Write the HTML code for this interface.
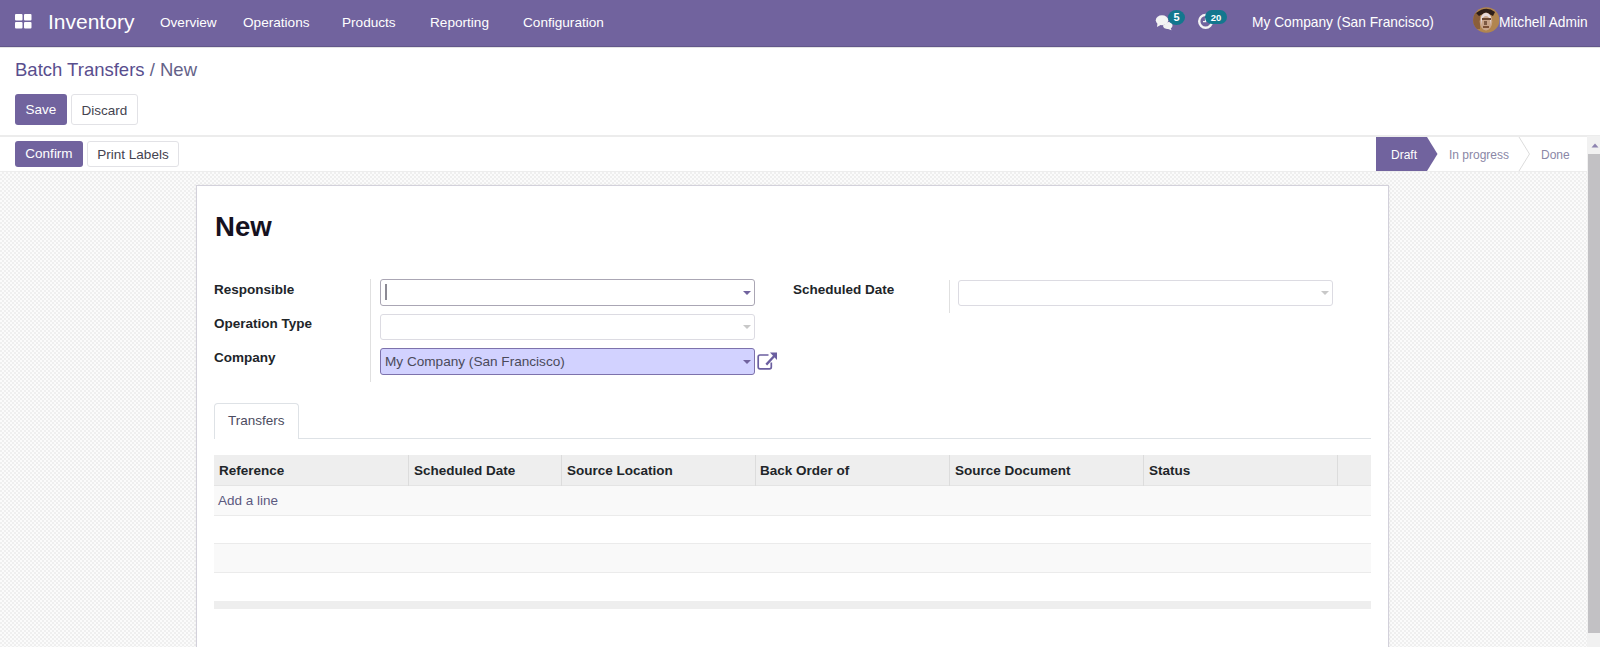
<!DOCTYPE html>
<html><head><meta charset="utf-8">
<style>
*{box-sizing:border-box;margin:0;padding:0}
html,body{width:1600px;height:647px;overflow:hidden;background:#fff;font-family:"Liberation Sans",sans-serif;font-size:13.5px;color:#212529}
.a{position:absolute;white-space:nowrap}
#nav{position:absolute;z-index:2;left:0;top:0;width:1600px;height:47px;background:#71639e;color:#fff;border-bottom:1px solid #62578a;box-shadow:0 1px 0 #e4e4e4}
#nav .t{position:absolute;top:0;line-height:46px;font-size:13.6px;color:#fff}
.badge{position:absolute;background:#13778e;color:#fff;font-weight:bold;font-size:10px;text-align:center;border-radius:9px}
#cp{position:absolute;left:0;top:46px;width:1600px;height:90px;background:#fff}
.btn{position:absolute;height:31px;border-radius:3px;font-size:13.5px;line-height:31px;text-align:center}
.bp{background:#71639e;color:#fff}
.bs{background:#fff;color:#44434f;border:1px solid #e2e2e6}
#bg{position:absolute;left:0;top:172px;width:1588px;height:475px;
 background-color:#f6f6f6;
 background-image:repeating-conic-gradient(#efefef 0 25%,#fbfbfb 0 50%);background-size:4px 4px}
#sheet{position:absolute;left:196px;top:185px;width:1193px;height:470px;background:#fff;border:1px solid #d3d1db;box-shadow:0 0 3px rgba(0,0,0,.06)}
.lbl{position:absolute;font-weight:bold;font-size:13.5px;color:#212529}
.inp{position:absolute;height:26px;border:1px solid #ced4da;border-radius:3px;background:#fff}
.caret{position:absolute;width:0;height:0;border-left:4px solid transparent;border-right:4px solid transparent;border-top:4px solid #71639e}
.th{position:absolute;top:456px;font-weight:bold;font-size:13.5px;line-height:30px;color:#212529}
</style></head><body>

<div id="nav">
  <svg class="a" style="left:15px;top:14px" width="17" height="15" viewBox="0 0 17 15">
    <rect x="0" y="0" width="7.5" height="6.5" rx="1" fill="#fff"/>
    <rect x="9" y="0" width="7.5" height="6.5" rx="1" fill="#fff"/>
    <rect x="0" y="8" width="7.5" height="6.5" rx="1" fill="#fff"/>
    <rect x="9" y="8" width="7.5" height="6.5" rx="1" fill="#fff"/>
  </svg>
  <div class="t" style="left:48px;top:-1px;font-size:21px">Inventory</div>
  <div class="t" style="left:160px">Overview</div>
  <div class="t" style="left:243px">Operations</div>
  <div class="t" style="left:342px">Products</div>
  <div class="t" style="left:430px">Reporting</div>
  <div class="t" style="left:523px">Configuration</div>

  <div class="t" style="left:1252px;font-size:13.75px">My Company (San Francisco)</div>
  <svg class="a" style="left:1473px;top:7px" width="27" height="26" viewBox="0 0 27 26">
    <defs><clipPath id="av"><ellipse cx="13.3" cy="13" rx="13.2" ry="12.8"/></clipPath></defs>
    <g clip-path="url(#av)">
      <rect width="27" height="26" fill="#b1854f"/>
      <rect x="0" y="6" width="7" height="16" fill="#8a5e3a"/>
      <path d="M3 6 Q13 -2 22 5 L20 9 Q13 4 6 9 Z" fill="#2e1e18"/>
      <ellipse cx="13" cy="14.5" rx="6.3" ry="9" fill="#c9a58a"/>
      <path d="M8 10 Q10 6 13 6 Q16 6 18 10 L18 18 Q17 9 13 9 Q9 9 8 18 Z" fill="#e6dadc"/>
      <rect x="9" y="11" width="9" height="2" fill="#6a4630"/>
      <rect x="10" y="19" width="6" height="2" fill="#7a4f34"/>
      <rect x="11" y="14" width="3" height="4" fill="#7d5a44"/>
    </g>
  </svg>
  <div class="t" style="left:1499px;font-size:13.75px">Mitchell Admin</div>
  <svg class="a" style="left:1155px;top:14px" width="20" height="17" viewBox="0 0 20 17">
    <path d="M8 11.5 C8 14 10.5 15 13 15 L16.5 16.2 L15.8 14.3 C17 13.5 17.5 12.5 17.5 11.5 C17.5 9.5 15.5 8 13 8 Z" fill="#f2f2f2"/>
    <ellipse cx="7" cy="6.2" rx="6.2" ry="5" fill="#f4f4f4"/>
    <path d="M2.5 9 L2 13 L6.5 10.5 Z" fill="#f4f4f4"/>
  </svg>
  <div class="badge" style="left:1168px;top:10px;width:17px;height:15px;line-height:15px;border-radius:50%;font-size:11px">5</div>
  <svg class="a" style="left:1197px;top:13px" width="18" height="17" viewBox="0 0 18 17">
    <circle cx="8.6" cy="8.3" r="6.4" fill="none" stroke="#f4f4f4" stroke-width="2.4"/>
    <path d="M8.6 5 V8.6 H6" fill="none" stroke="#f4f4f4" stroke-width="1.4"/>
  </svg>
  <div class="badge" style="left:1205px;top:10px;width:22px;height:13.5px;line-height:13.5px;border-radius:7px;font-size:9.5px;padding-top:0.5px">20</div>
</div>

<div id="cp">
  <div class="a" style="left:15px;top:10px;font-size:18.5px;line-height:28px;color:#594e8e">Batch Transfers<span style="color:#646288"> / New</span></div>
  <div class="btn bp" style="left:15px;top:48px;width:52px">Save</div>
  <div class="btn bs" style="left:71px;top:48px;width:67px">Discard</div>
</div>

<div class="a" style="left:0;top:135px;width:1600px;height:2px;background:#ececec"></div>
<div class="a" style="left:0;top:171px;width:1588px;height:1px;background:#ededed"></div>
<div class="btn bp" style="left:15px;top:141px;width:68px;height:26px;line-height:26px">Confirm</div>
<div class="btn bs" style="left:87px;top:141px;width:92px;height:26px;line-height:26px">Print Labels</div>

<div id="bg"></div>
<div id="sheet"></div>

<div class="a" style="left:215px;top:211px;font-size:27.6px;font-weight:bold;color:#16121f">New</div>


<!-- statusbar -->
<svg class="a" style="left:1376px;top:137px" width="211" height="34" viewBox="0 0 211 34">
  <polygon points="0,0 51,0 61.5,17 51,34 0,34" fill="#71639e"/>
  <polyline points="143,0 153.5,17 143,34" fill="none" stroke="#dcdcdc" stroke-width="1"/>
</svg>
<div class="a" style="left:1391px;top:138px;line-height:34px;font-size:12px;color:#fff">Draft</div>
<div class="a" style="left:1449px;top:138px;line-height:34px;font-size:12px;color:#8a87a6">In progress</div>
<div class="a" style="left:1541px;top:138px;line-height:34px;font-size:12px;color:#8a87a6">Done</div>

<!-- scrollbar -->
<div class="a" style="left:1587px;top:136px;width:13px;height:511px;background:#f1f1f1"></div>
<div class="a" style="left:1588px;top:154px;width:12px;height:479px;background:#c2c1c4"></div>
<svg class="a" style="left:1589px;top:141px" width="10" height="8" viewBox="0 0 10 8"><polygon points="2.5,6.5 6,2.5 9.5,6.5" fill="#8e84b0"/></svg>

<!-- form fields -->
<div class="lbl" style="left:214px;top:282px">Responsible</div>
<div class="lbl" style="left:214px;top:316px">Operation Type</div>
<div class="lbl" style="left:214px;top:350px">Company</div>
<div class="a" style="left:370px;top:279px;width:1px;height:103px;background:#e0e0e0"></div>
<div class="inp" style="left:380px;top:279px;width:375px;height:27px;border:1.5px solid #aaa6b4"></div>
<div class="a" style="left:385px;top:284px;width:2px;height:16px;background:#8c8a94"></div>
<div class="caret" style="left:743px;top:291px"></div>
<div class="inp" style="left:380px;top:314px;width:375px;border-color:#dcdbe2"></div>
<div class="caret" style="left:743px;top:325px;border-top-color:#c8c8c8"></div>
<div class="inp" style="left:380px;top:348px;width:375px;height:27px;background:#d2d2ff;border-color:#7d72ac"></div>
<div class="a" style="left:385px;top:353px;line-height:18px;font-size:13.6px;color:#4a4a5a">My Company (San Francisco)</div>
<div class="caret" style="left:743px;top:360px"></div>
<svg class="a" style="left:750px;top:345px" width="35" height="30" viewBox="0 0 35 30">
  <path d="M18.5 10 H10 q-1.8 0 -1.8 1.8 V22 q0 1.8 1.8 1.8 H19.5 q1.8 0 1.8 -1.8 V17.6" fill="none" stroke="#6b5fa0" stroke-width="1.7"/>
  <polygon points="20,7.6 27,7.6 27,15" fill="#6b5fa0"/>
  <path d="M16.3 19.6 L24 11.2" fill="none" stroke="#6b5fa0" stroke-width="2.3"/>
</svg>

<div class="lbl" style="left:793px;top:282px">Scheduled Date</div>
<div class="a" style="left:949px;top:280px;width:1px;height:33px;background:#e0e0e0"></div>
<div class="inp" style="left:958px;top:280px;width:375px;border-color:#dcdbe2"></div>
<div class="caret" style="left:1321px;top:291px;border-top-color:#c8c8c8"></div>

<!-- tabs -->
<div class="a" style="left:214px;top:438px;width:1157px;height:1px;background:#dee2e6"></div>
<div class="a" style="left:214px;top:403px;width:85px;height:36px;background:#fff;border:1px solid #dee2e6;border-bottom:none;border-radius:4px 4px 0 0"></div>
<div class="a" style="left:228px;top:412px;line-height:18px;font-size:13.5px;color:#4c4c60">Transfers</div>

<!-- table -->
<div class="a" style="left:214px;top:455px;width:1157px;height:31px;background:#eeeeee;border-bottom:1px solid #e4e4e4"></div>
<div class="a" style="left:214px;top:486px;width:1157px;height:30px;background:#f9f9f9;border-bottom:1px solid #ebebeb"></div>
<div class="a" style="left:214px;top:516px;width:1157px;height:28px;background:#fff;border-bottom:1px solid #ebebeb"></div>
<div class="a" style="left:214px;top:544px;width:1157px;height:29px;background:#f9f9f9;border-bottom:1px solid #ebebeb"></div>
<div class="a" style="left:214px;top:601px;width:1157px;height:8px;background:#eeeeee"></div>
<div class="a" style="left:408px;top:455px;width:1px;height:31px;background:#dcdcdc"></div>
<div class="a" style="left:561px;top:455px;width:1px;height:31px;background:#dcdcdc"></div>
<div class="a" style="left:755px;top:455px;width:1px;height:31px;background:#dcdcdc"></div>
<div class="a" style="left:949px;top:455px;width:1px;height:31px;background:#dcdcdc"></div>
<div class="a" style="left:1143px;top:455px;width:1px;height:31px;background:#dcdcdc"></div>
<div class="a" style="left:1337px;top:455px;width:1px;height:31px;background:#dcdcdc"></div>
<div class="th" style="left:219px">Reference</div>
<div class="th" style="left:414px">Scheduled Date</div>
<div class="th" style="left:567px">Source Location</div>
<div class="th" style="left:760px">Back Order of</div>
<div class="th" style="left:955px">Source Document</div>
<div class="th" style="left:1149px">Status</div>
<div class="a" style="left:218px;top:492px;line-height:18px;font-size:13.5px;color:#5c5a80">Add a line</div>

</body></html>
